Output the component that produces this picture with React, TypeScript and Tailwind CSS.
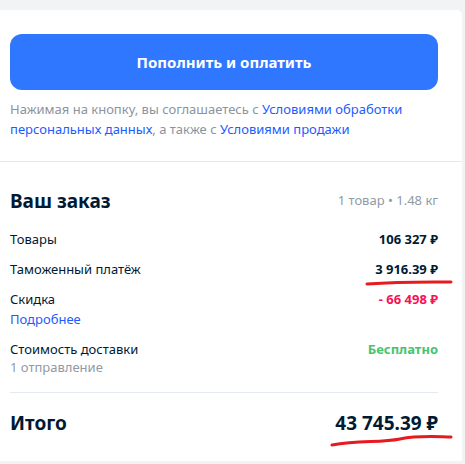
const rows = [
  { label: 'Товары', value: '106 327 ₽', tone: 'text-[#001a34]' },
  { label: 'Таможенный платёж', value: '3 916.39 ₽', tone: 'text-[#001a34]' },
]

export default function App() {
  return (
    <div className="relative min-h-[464px] bg-[#f2f3f5] pt-[10px] pr-[3px] font-['Noto_Sans',sans-serif] text-[#001a34]">
      <div className="rounded-tr-[5px] bg-white">
        <section className="pt-[24px] pb-[22px] pl-[10px] pr-[24px]">
          <button className="flex h-[56px] w-full items-center justify-center rounded-[12px] bg-[#2f77ff] text-[15px] font-bold text-white">
            Пополнить и оплатить
          </button>
          <p className="mt-[9px] text-[13px] leading-[20px] text-[#8b949e]">
            Нажимая на кнопку, вы соглашаетесь с{' '}
            <a className="text-[#1a5cff]">Условиями обработки персональных данных</a>, а также с{' '}
            <a className="text-[#1a5cff]">Условиями продажи</a>
          </p>
        </section>

        <div className="h-px bg-[#e4e9ef]" />

        <section className="pt-[26px] pb-[25px] pl-[10px] pr-[24px]">
          <div className="flex items-center justify-between">
            <h2 className="text-[19px] font-bold leading-[26px]">Ваш заказ</h2>
            <span className="text-[13px] text-[#8f9aa5]">1 товар • 1.48 кг</span>
          </div>

          <div className="mt-[16px] flex flex-col gap-[12px] text-[13px] leading-[18px]">
            {rows.map((r) => (
              <div key={r.label} className="flex justify-between">
                <span>{r.label}</span>
                <span className={`font-bold ${r.tone}`}>{r.value}</span>
              </div>
            ))}
            <div className="flex justify-between">
              <div className="flex flex-col gap-[2px]">
                <span>Скидка</span>
                <a className="text-[#1a5cff]">Подробнее</a>
              </div>
              <span className="font-bold text-[#f91155]">- 66 498 ₽</span>
            </div>
            <div className="flex justify-between">
              <div className="flex flex-col">
                <span>Стоимость доставки</span>
                <span className="text-[#8f9aa5]">1 отправление</span>
              </div>
              <span className="font-bold text-[#45c470]">Бесплатно</span>
            </div>
          </div>

          <div className="mt-[16px] h-px bg-[#e4e9ef]" />

          <div className="mt-[17px] flex items-center justify-between text-[19px] font-bold leading-[26px]">
            <span>Итого</span>
            <span>43 745.39 ₽</span>
          </div>
        </section>
      </div>

      <svg className="pointer-events-none absolute left-0 top-0" width="465" height="464" fill="none">
        <path d="M367 284 Q400 281.5 451 282" stroke="#e61b1f" strokeWidth="3" strokeLinecap="round" />
        <path d="M332 445 C360 440 380 443 400 439 S440 437 451 437" stroke="#e61b1f" strokeWidth="3" strokeLinecap="round" />
      </svg>
    </div>
  )
}
